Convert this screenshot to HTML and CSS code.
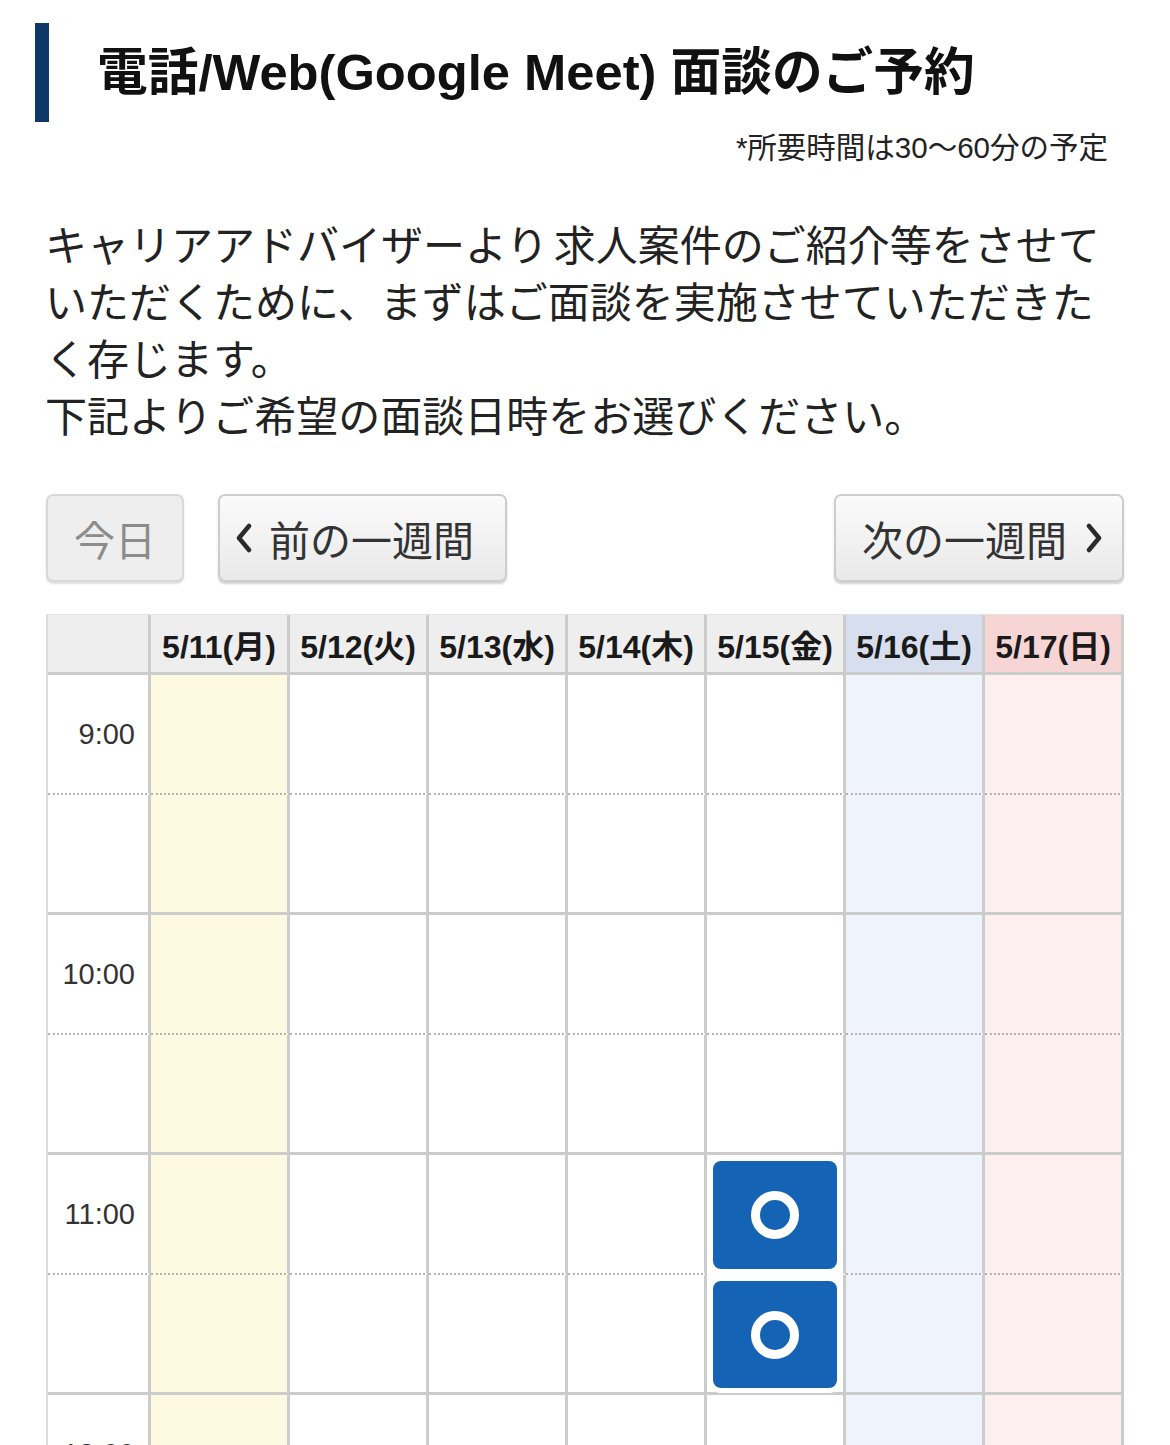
FILE: index.html
```html
<!DOCTYPE html>
<html lang="ja">
<head>
<meta charset="utf-8">
<title>面談のご予約</title>
<link rel="stylesheet" href="styles.css">
</head>
<body>
<main class="page">
  <h1 class="title"><span class="title-bar"></span><span class="title-text">電話/Web(Google Meet) 面談のご予約</span></h1>
  <p class="note">*所要時間は30〜60分の予定</p>
  <p class="lead">キャリアアドバイザーより 求人案件のご紹介等をさせていただくために、まずはご面談を実施させていただきたく存じます。<br>下記よりご希望の面談日時をお選びください。</p>

  <div class="nav">
    <div class="nav-left">
      <button class="btn btn-today" disabled>今日</button>
      <button class="btn btn-prev"><svg class="chev" viewBox="0 0 18 30" width="18" height="30"><polyline points="14,3 4,15 14,27"/></svg><span>前の一週間</span></button>
    </div>
    <button class="btn btn-next"><span>次の一週間</span><svg class="chev" viewBox="0 0 18 30" width="18" height="30"><polyline points="4,3 14,15 4,27"/></svg></button>
  </div>

  <div class="cal">
    <div class="hd"></div>
    <div class="hd">5/11(月)</div>
    <div class="hd">5/12(火)</div>
    <div class="hd">5/13(水)</div>
    <div class="hd">5/14(木)</div>
    <div class="hd">5/15(金)</div>
    <div class="hd sat">5/16(土)</div>
    <div class="hd sun">5/17(日)</div>

    <div class="c t time">9:00</div>
    <div class="c t mon"></div><div class="c t"></div><div class="c t"></div><div class="c t"></div><div class="c t"></div><div class="c t sat"></div><div class="c t sun"></div>
    <div class="c b"></div>
    <div class="c b mon"></div><div class="c b"></div><div class="c b"></div><div class="c b"></div><div class="c b"></div><div class="c b sat"></div><div class="c b sun"></div>

    <div class="c t time">10:00</div>
    <div class="c t mon"></div><div class="c t"></div><div class="c t"></div><div class="c t"></div><div class="c t"></div><div class="c t sat"></div><div class="c t sun"></div>
    <div class="c b"></div>
    <div class="c b mon"></div><div class="c b"></div><div class="c b"></div><div class="c b"></div><div class="c b"></div><div class="c b sat"></div><div class="c b sun"></div>

    <div class="c t time">11:00</div>
    <div class="c t mon"></div><div class="c t"></div><div class="c t"></div><div class="c t"></div>
    <div class="c t slot-cell"><a class="slot" href="#"><span class="ring"></span></a></div>
    <div class="c t sat"></div><div class="c t sun"></div>
    <div class="c b"></div>
    <div class="c b mon"></div><div class="c b"></div><div class="c b"></div><div class="c b"></div>
    <div class="c b slot-cell"><a class="slot" href="#"><span class="ring"></span></a></div>
    <div class="c b sat"></div><div class="c b sun"></div>

    <div class="c t time">12:00</div>
    <div class="c t mon"></div><div class="c t"></div><div class="c t"></div><div class="c t"></div><div class="c t"></div><div class="c t sat"></div><div class="c t sun"></div>
    <div class="c b"></div>
    <div class="c b mon"></div><div class="c b"></div><div class="c b"></div><div class="c b"></div><div class="c b"></div><div class="c b sat"></div><div class="c b sun"></div>
  </div>
</main>
</body>
</html>
```

FILE: styles.css
```css
html, body {
  margin: 0;
  padding: 0;
  background: #fff;
}

body {
  font-family: "Liberation Sans", "Noto Sans CJK JP", sans-serif;
  color: #222;
}

.page {
  padding: 23px 46px 0 46px;
}

.title {
  display: flex;
  align-items: center;
  margin: 0 0 0 -11px;
  height: 99px;
  font-size: 50.7px;
  font-weight: bold;
  color: #111;
}

.title-bar {
  width: 14px;
  height: 99px;
  background: #0d3868;
  flex: none;
}

.title-text {
  margin-left: 48px;
  line-height: 1;
  position: relative;
  top: 1px;
}

.note {
  margin: 6px 16px 0 0;
  text-align: right;
  font-size: 29.5px;
  line-height: 40px;
  color: #222;
}

.lead {
  margin: 50px 0 0 -1px;
  font-size: 42px;
  line-height: 57px;
  color: #222;
  word-spacing: -6px;
}

.nav {
  margin-top: 48px;
  display: flex;
  justify-content: space-between;
  align-items: center;
}

.nav-left {
  display: flex;
  gap: 34px;
}

.btn {
  height: 88px;
  box-sizing: border-box;
  border: 2px solid #cdcdcd;
  border-radius: 7px;
  background: linear-gradient(#fbfbfb, #e9e9e9);
  box-shadow: 0 2px 2px rgba(0, 0, 0, 0.18);
  font-family: "Liberation Sans", "Noto Sans CJK JP", sans-serif;
  font-size: 41px;
  color: #333;
  display: flex;
  align-items: center;
  cursor: pointer;
}

.btn-today {
  width: 138px;
  justify-content: center;
  background: #eeeeee;
  color: #8c8c8c;
  border-color: #d8d8d8;
  box-shadow: 0 2px 2px rgba(0, 0, 0, 0.12);
}

.btn-prev {
  width: 289px;
  padding: 0 0 0 15px;
}

.btn-prev span {
  margin-left: 16px;
}

.btn-next {
  width: 290px;
  padding: 0 0 0 26px;
}

.btn-next span {
  margin-right: 18px;
}

.chev {
  flex: none;
}

.chev polyline {
  fill: none;
  stroke: #2b2b2b;
  stroke-width: 4.5;
  stroke-linecap: round;
  stroke-linejoin: round;
}

.cal {
  margin-top: 32px;
  display: grid;
  grid-template-columns: 103px repeat(7, 139px);
  border-left: 2px solid #dcdcdc;
  border-top: 1px solid #e4e4e4;
  width: max-content;
}

.hd {
  height: 60px;
  box-sizing: border-box;
  background: #eeeeee;
  border-right: 3px solid #cccccc;
  border-bottom: 3px solid #cccccc;
  display: flex;
  align-items: center;
  justify-content: center;
  font-size: 32px;
  font-weight: bold;
  color: #1a1a1a;
  white-space: nowrap;
}

.hd.sat {
  background: #d7dfee;
}

.hd.sun {
  background: #f8d5d5;
}

.c {
  height: 120px;
  box-sizing: border-box;
  border-right: 3px solid #cccccc;
  background: #fff;
}

.c.t {
  border-bottom: 2px dotted #b4b4b4;
}

.c.b {
  border-bottom: 3px solid #cccccc;
}

.c.mon {
  background: #fefae1;
}

.c.sat {
  background: #eff3fc;
}

.c.sun {
  background: #fdeff0;
}

.time {
  display: flex;
  align-items: center;
  justify-content: flex-end;
  padding-right: 13px;
  font-size: 29px;
  color: #333;
}

.slot-cell {
  padding: 6px 6px 4px 6px;
}

.slot-cell.t {
  border-bottom-color: #fff;
}

.slot {
  position: relative;
  z-index: 1;
  display: flex;
  align-items: center;
  justify-content: center;
  height: 100%;
  background: #1463b4;
  border-radius: 8px;
  box-shadow: 0 0 0 5px #fff;
}

.ring {
  width: 30px;
  height: 30px;
  border: 9px solid #fff;
  border-radius: 50%;
}
```
